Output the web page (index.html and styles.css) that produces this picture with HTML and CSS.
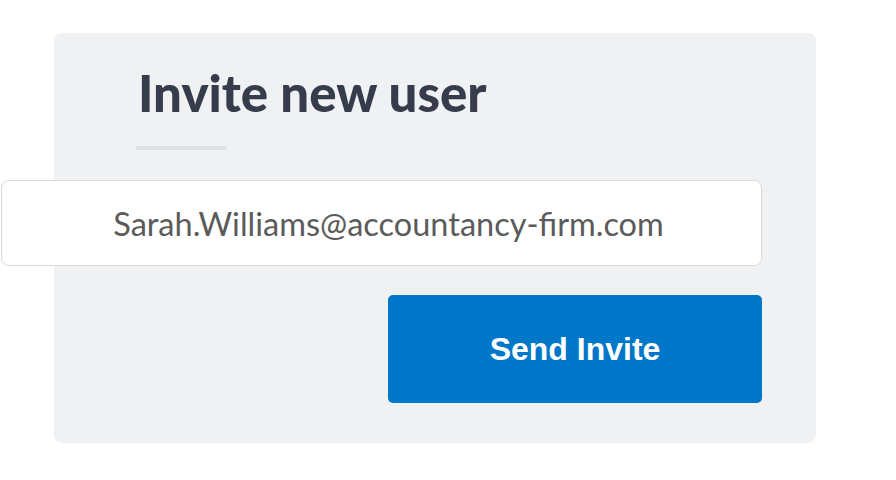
FILE: index.html
```html
<!DOCTYPE html>
<html lang="en">
<head>
    <meta charset="UTF-8">
    <meta name="viewport" content="width=device-width, initial-scale=1.0">
    <title>Invite new user</title>
    <link rel="stylesheet" href="styles.css">
</head>
<body>

<div class="invite-card">
    <h1 class="invite-title">Invite new user</h1>
    <div class="title-rule"></div>
    <div class="email-field">Sarah.Williams@accountancy-firm.com</div>
    <button class="send-btn">Send Invite</button>
</div>

</body>
</html>
```

FILE: styles.css
```css
body {
    margin: 0;
    background: #ffffff;
    font-family: Lato, "Open Sans", sans-serif;
}

.invite-card {
    display: flex;
    flex-direction: column;
    align-items: flex-start;
    width: 762px;
    height: 410px;
    box-sizing: border-box;
    margin: 33px 0 0 54px;
    padding: 0 54px 0 83px;
    background-color: #f0f1f3;
    border-radius: 8px;
}

.invite-title {
    margin: 29px 0 0 1px;
    font-size: 51px;
    line-height: 62px;
    font-weight: 900;
    color: #363c4b;
}

.title-rule {
    width: 90px;
    height: 4px;
    margin-top: 22px;
    margin-left: -1px;
    background-color: #dfe1e5;
}

.email-field {
    align-self: stretch;
    margin: 30px 0 0 -136px;
    height: 86px;
    box-sizing: border-box;
    display: flex;
    align-items: center;
    justify-content: center;
    padding-left: 14px;
    background: #ffffff;
    border: 1px solid #dadbdd;
    border-radius: 8px;
    font-size: 32.5px;
    color: #5b5b5b;
}

.send-btn {
    align-self: flex-end;
    width: 374px;
    height: 108px;
    margin-top: 29px;
    border: none;
    border-radius: 5px;
    background-color: #0077c8;
    color: #ffffff;
    font-family: "Liberation Sans", Arial, sans-serif;
    font-size: 32px;
    font-weight: bold;
    cursor: pointer;
}
```
